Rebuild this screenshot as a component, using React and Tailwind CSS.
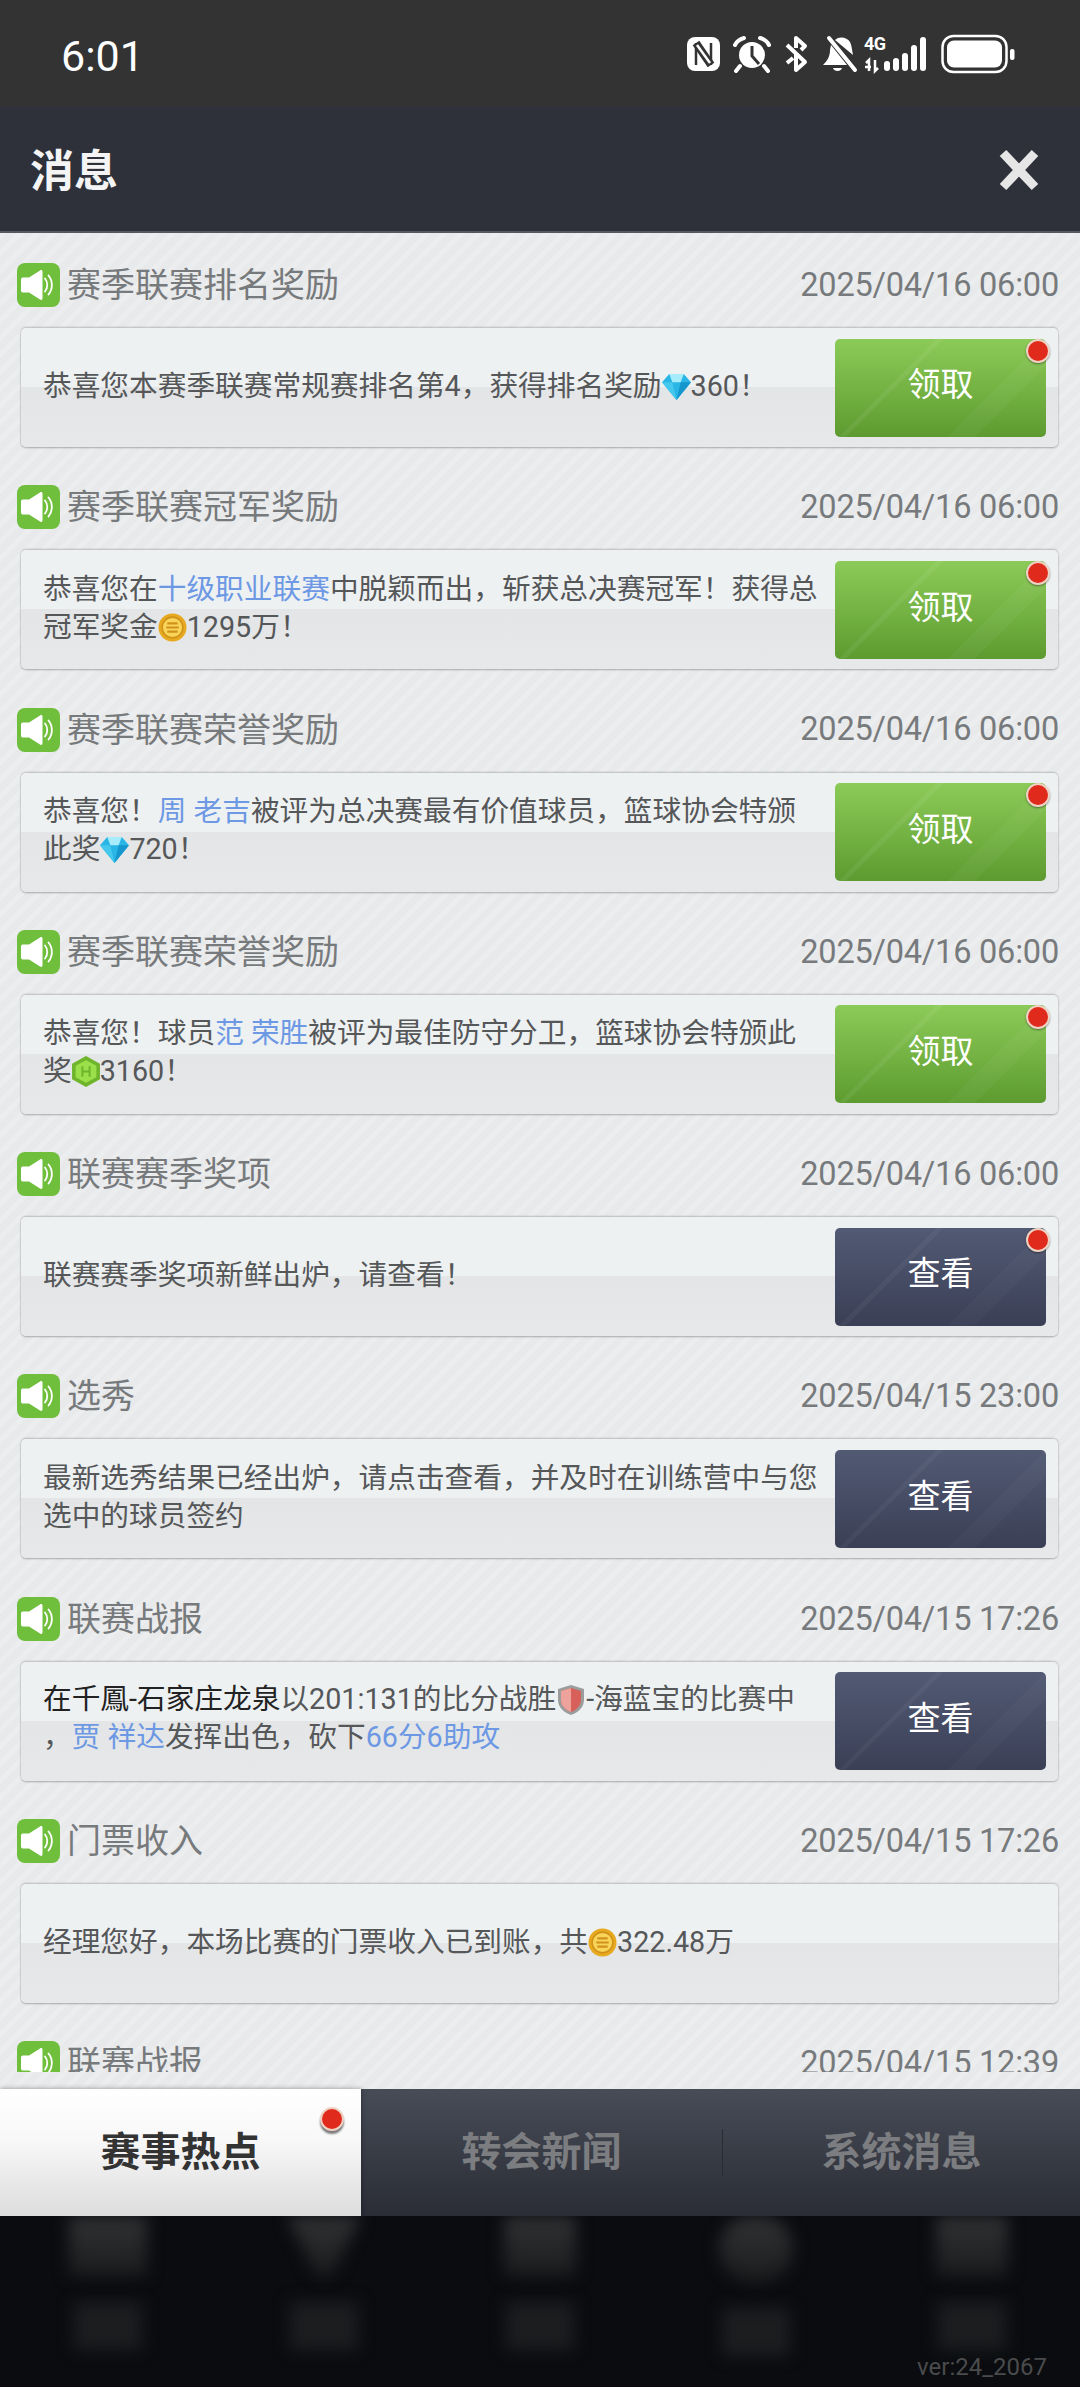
const FONT = "font-['Roboto','Noto_Sans_CJK_SC',sans-serif]";

function Speaker() {
  return (
    <svg width="43" height="44" viewBox="0 0 43 44" className="shrink-0">
      <rect width="43" height="44" rx="8" fill="#6fbe3c" />
      <path d="M4 16.5 C4 15 5 14.5 6.5 14.5 H12 L23 7.5 C24.5 6.6 25.5 7.2 25.5 9 V35 C25.5 36.8 24.5 37.4 23 36.5 L12 29.5 H6.5 C5 29.5 4 29 4 27.5 Z" fill="#fff" />
      <path d="M28 15.5 C31 19 31 25 28 28.5" stroke="#fff" strokeWidth="1.8" fill="none" strokeLinecap="round" />
      <path d="M31.5 12.5 C36 18 36 26 31.5 31.5" stroke="#fff" strokeWidth="1.8" fill="none" strokeLinecap="round" />
    </svg>
  );
}

function Diamond() {
  return (
    <svg width="29" height="27" viewBox="0 0 28 26" className="inline-block align-[-4px]">
      <path d="M7 1 H21 L28 9 L14 26 L0 9 Z" fill="#29b6e6" />
      <path d="M7 1 H21 L18 9 H10 Z" fill="#a6ecfb" />
      <path d="M0 9 H10 L14 26 Z" fill="#45c8ee" />
      <path d="M28 9 H18 L14 26 Z" fill="#1596cc" />
    </svg>
  );
}

function Coin() {
  return (
    <svg width="29" height="29" viewBox="0 0 28 28" className="inline-block align-[-5px]">
      <circle cx="14" cy="14" r="13.5" fill="#e7a91f" />
      <circle cx="14" cy="14" r="10" fill="#f8d558" stroke="#d1921a" strokeWidth="1.5" />
      <path d="M9 10 H19 M8 14 H20 M9 18 H19" stroke="#d1921a" strokeWidth="2" />
    </svg>
  );
}

function Hex() {
  return (
    <svg width="28" height="31" viewBox="0 0 27 30" className="inline-block align-[-6px]">
      <path d="M13.500 0 L27 7.500 V22.500 L13.500 30 L0 22.500 V7.500 Z" fill="#6fb52c" />
      <path d="M13.500 4 L23.500 9.500 V20.500 L13.500 26 L3.500 20.500 V9.500 Z" fill="#9be04a" />
      <path d="M10 10 V20 M17 10 V20 M10 15 H17" stroke="#6fb52c" strokeWidth="2" />
    </svg>
  );
}

function Shield() {
  return (
    <svg width="26" height="30" viewBox="0 0 26 30" className="inline-block align-[-6px] mx-[2px]">
      <path d="M13 0 L26 4 V15 C26 23 19 28 13 30 C7 28 0 23 0 15 V4 Z" fill="#9a9d9c" />
      <path d="M13 3 L23 6 V15 C23 21 18 25 13 27 C8 25 3 21 3 15 V6 Z" fill="#d8605a" />
      <path d="M13 3 V27 C8 25 3 21 3 15 V6 Z" fill="#eda29c" />
    </svg>
  );
}

const B = ({ children }) => <span className="text-[#6d98e4]">{children}</span>;

const rows = [
  { t: "赛季联赛排名奖励", d: "2025/04/16 06:00", btn: "g", dot: true, c: <>恭喜您本赛季联赛常规赛排名第4，获得排名奖励<Diamond />360！</> },
  { t: "赛季联赛冠军奖励", d: "2025/04/16 06:00", btn: "g", dot: true, c: <>恭喜您在<B>十级职业联赛</B>中脱颖而出，斩获总决赛冠军！获得总<br />冠军奖金<Coin />1295万！</> },
  { t: "赛季联赛荣誉奖励", d: "2025/04/16 06:00", btn: "g", dot: true, c: <>恭喜您！<B>周 老吉</B>被评为总决赛最有价值球员，篮球协会特颁<br />此奖<Diamond />720！</> },
  { t: "赛季联赛荣誉奖励", d: "2025/04/16 06:00", btn: "g", dot: true, c: <>恭喜您！球员<B>范 荣胜</B>被评为最佳防守分卫，篮球协会特颁此<br />奖<Hex />3160！</> },
  { t: "联赛赛季奖项", d: "2025/04/16 06:00", btn: "d", dot: true, c: <>联赛赛季奖项新鲜出炉，请查看！</> },
  { t: "选秀", d: "2025/04/15 23:00", btn: "d", c: <>最新选秀结果已经出炉，请点击查看，并及时在训练营中与您<br />选中的球员签约</> },
  { t: "联赛战报", d: "2025/04/15 17:26", btn: "d", up: true, c: <><span className="text-[#222]">在千鳳-石家庄龙泉</span>以201:131的比分战胜<Shield />-海蓝宝的比赛中<br />，<B>贾 祥达</B>发挥出色，砍下<B>66分6助攻</B></> },
  { t: "门票收入", d: "2025/04/15 17:26", c: <>经理您好，本场比赛的门票收入已到账，共<Coin />322.48万</> },
  { t: "联赛战报", d: "2025/04/15 12:39" },
];

function Dot({ className }) {
  return <span className={"absolute w-[24px] h-[24px] rounded-full bg-[#e02a1b] border-2 border-[#eed3c4] shadow-[0_1px_2px_rgba(0,0,0,0.4)] " + className} />;
}

function Row({ r }) {
  return (
    <div className="h-[222.3px] shrink-0">
      <div className="h-[95px] pt-[9px] pl-[17px] pr-[21px] flex items-center">
        <Speaker />
        <span className="ml-[7px] text-[34px] text-[#777a7c] leading-none">{r.t}</span>
        <span className="ml-auto text-[32.5px] text-[#777a7c] leading-none tracking-[-0.2px]">{r.d}</span>
      </div>
      {r.c && (
        <div className="ml-[21px] w-[1037px] h-[119px] rounded-[5px] flex items-center bg-[linear-gradient(to_bottom,#eef1f2_0%,#eef1f2_50%,#e3e5e6_50%,#e6e8e9_100%)] shadow-[0_-1px_2px_rgba(0,0,0,0.2),0_1px_2px_rgba(0,0,0,0.28)]">
          <div className={"flex-1 pl-[22px] text-[28.7px] leading-[38px] text-[#555759] whitespace-nowrap " + (r.up ? "-mt-[7px]" : "mb-[4px]")}>{r.c}</div>
          {r.btn && (
            <div className={"relative w-[211px] h-[98px] mr-[12px] pb-[5px] rounded-[5px] flex items-center justify-center text-[33px] text-white " + (r.btn === "g"
              ? "bg-[linear-gradient(135deg,transparent_33%,rgba(255,255,255,0.06)_33%,rgba(255,255,255,0.06)_35%,transparent_35%,transparent_68%,rgba(255,255,255,0.035)_68%,rgba(255,255,255,0.035)_77%,transparent_77%),linear-gradient(to_bottom,#8ccb58,#5d9b30)]"
              : "bg-[linear-gradient(135deg,transparent_33%,rgba(255,255,255,0.04)_33%,rgba(255,255,255,0.04)_35%,transparent_35%,transparent_68%,rgba(255,255,255,0.025)_68%,rgba(255,255,255,0.025)_77%,transparent_77%),linear-gradient(to_bottom,#525a74,#3a3f55)]")}>
              {r.btn === "g" ? "领取" : "查看"}
              {r.dot && <Dot className="top-0 -right-[4px]" />}
            </div>
          )}
        </div>
      )}
    </div>
  );
}

function StatusIcons() {
  return (
    <svg width="330" height="40" viewBox="0 0 330 40" className="block">
      {/* NFC */}
      <rect x="0" y="3" width="33" height="34" rx="8" fill="#fff" />
      <path d="M9 9 V31 M24 9 V31" stroke="#333" strokeWidth="2.500" />
      <path d="M9 9 L24 31" stroke="#333" strokeWidth="8" />
      <path d="M10 11 L23 29" stroke="#fff" strokeWidth="2.500" />
      {/* alarm */}
      <circle cx="65" cy="21" r="13" fill="#fff" />
      <path d="M65 12 V22 L72 30" stroke="#333" strokeWidth="3" fill="none" />
      <path d="M48 11 C50 7 53 5 57 4 M82 11 C80 7 77 5 73 4" stroke="#fff" strokeWidth="4" fill="none" strokeLinecap="round" />
      <path d="M53 32 L49 37 M77 32 L81 37" stroke="#fff" strokeWidth="4" strokeLinecap="round" />
      {/* bluetooth off */}
      <path d="M100 11 L118 28 L109 36 V20 M109 14 V4 L118 12 L114 16 M100 29 L106 24" stroke="#fff" strokeWidth="4" fill="none" strokeLinejoin="round" />
      {/* bell off */}
      <path d="M142 4 L168 36" stroke="#fff" strokeWidth="4" strokeLinecap="round" />
      <path d="M148 6 C152 2 160 3 163 8 C165 12 165 17 166 21 Z" fill="#fff" />
      <path d="M144 11 L160 31 H136 C140 27 143 23 143 16 Z" fill="#fff" />
      <path d="M146 34 H155 C154 38 147 38 146 34 Z" fill="#fff" />
      {/* arrows */}
      <path d="M182 37 V26 L179 29 M184 33 L178 33 M188 26 V37 L191 34" stroke="#fff" strokeWidth="2.500" fill="none" />
      {/* bars */}
      <rect x="197" y="27" width="6" height="10" rx="3" fill="#fff" />
      <rect x="206" y="24" width="6" height="13" rx="3" fill="#fff" />
      <rect x="215" y="19" width="6" height="18" rx="3" fill="#fff" />
      <rect x="224" y="11" width="6" height="26" rx="3" fill="#fff" />
      <rect x="233" y="3" width="6" height="34" rx="3" fill="#fff" />
      {/* battery */}
      <rect x="255.500" y="2" width="64" height="36" rx="11" fill="none" stroke="#fff" strokeWidth="2.500" />
      <rect x="260" y="6.500" width="55" height="27" rx="7" fill="#fff" />
      <rect x="323" y="15" width="4.500" height="11" rx="2" fill="#fff" />
    </svg>
  );
}

export default function App() {
  return (
    <div className={"w-[1080px] h-[2387px] overflow-hidden flex flex-col " + FONT}>
      {/* status bar */}
      <div className="relative h-[107px] shrink-0 bg-[#333333] flex items-center justify-between pl-[61px] pr-[63px]">
        <span className="text-[43px] text-white leading-none mt-[5px]">6:01</span>
        <div className="relative">
          <StatusIcons />
          <span className="absolute left-[177px] top-[-1px] text-[18px] font-bold text-white leading-[22px] tracking-[-0.5px]">4G</span>
        </div>
      </div>

      {/* header */}
      <div className="h-[126px] shrink-0 bg-[#2e3139] flex items-center justify-between pl-[30px] pr-[40px] border-b-2 border-[#55585f]">
        <span className="text-[44px] font-bold text-[#f4f4f4] leading-none mt-[5px]">消息</span>
        <svg width="42" height="42" viewBox="0 0 42 42" className="mt-[2px]">
          <path d="M5 4 L37 38 M37 4 L5 38" stroke="#e6e6e6" strokeWidth="9" />
        </svg>
      </div>

      {/* list */}
      <div className="h-[1856px] shrink-0 bg-[#eaebec] bg-[repeating-linear-gradient(135deg,rgba(255,255,255,0.1)_0px,rgba(255,255,255,0.1)_5px,rgba(0,0,0,0.006)_5px,rgba(0,0,0,0.006)_12px)]">
        <div className="h-[1839px] overflow-hidden flex flex-col">
          {rows.map((r, i) => <Row key={i} r={r} />)}
        </div>
      </div>

      {/* tabs */}
      <div className="h-[127px] shrink-0 flex bg-[linear-gradient(to_bottom,#484c57,#2a2d35)]">
        <div className="relative w-[361px] flex items-center justify-center text-[40px] font-bold text-[#333] bg-[linear-gradient(to_bottom,#ffffff_0%,#f8f8f8_40%,#dcdcdc_100%)] shadow-[0_0_5px_rgba(0,0,0,0.4)]">
          赛事热点
          <Dot className="right-[17px] top-[18px] border-0 shadow-[0_3px_2px_rgba(0,0,0,0.5)]" />
        </div>
        <div className="w-[361px] flex items-center justify-center text-[40px] font-bold text-[#7c7d80]">转会新闻</div>
        <div className="my-[40px] w-px bg-[#2a2c33]" />
        <div className="flex-1 flex items-center justify-center text-[40px] font-bold text-[#7c7d80]">系统消息</div>
      </div>

      {/* blurred nav */}
      <div className="relative flex-1 bg-[#0a0c0f] grid grid-cols-5 overflow-hidden">
        {[
          "w-[78px] h-[60px] rounded-sm",
          "w-[74px] h-[60px] [clip-path:polygon(0_0,100%_0,60%_100%,40%_100%)]",
          "w-[72px] h-[60px] rounded-sm",
          "w-[74px] h-[66px] rounded-full",
          "w-[72px] h-[60px] rounded-sm",
        ].map((s, i) => (
          <div key={i} className="flex flex-col items-center">
            <div className="blur-[8px]">
              <div className={s + " bg-[linear-gradient(to_bottom,#313234,#1b1c1e)]"} />
            </div>
            <div className="mt-[26px] w-[68px] h-[48px] bg-[#1c1d1f] blur-[8px]" />
          </div>
        ))}
        <span className="absolute right-[33px] bottom-[8px] text-[24px] text-[#4a4b4d] leading-none">ver:24_2067</span>
      </div>
    </div>
  );
}
